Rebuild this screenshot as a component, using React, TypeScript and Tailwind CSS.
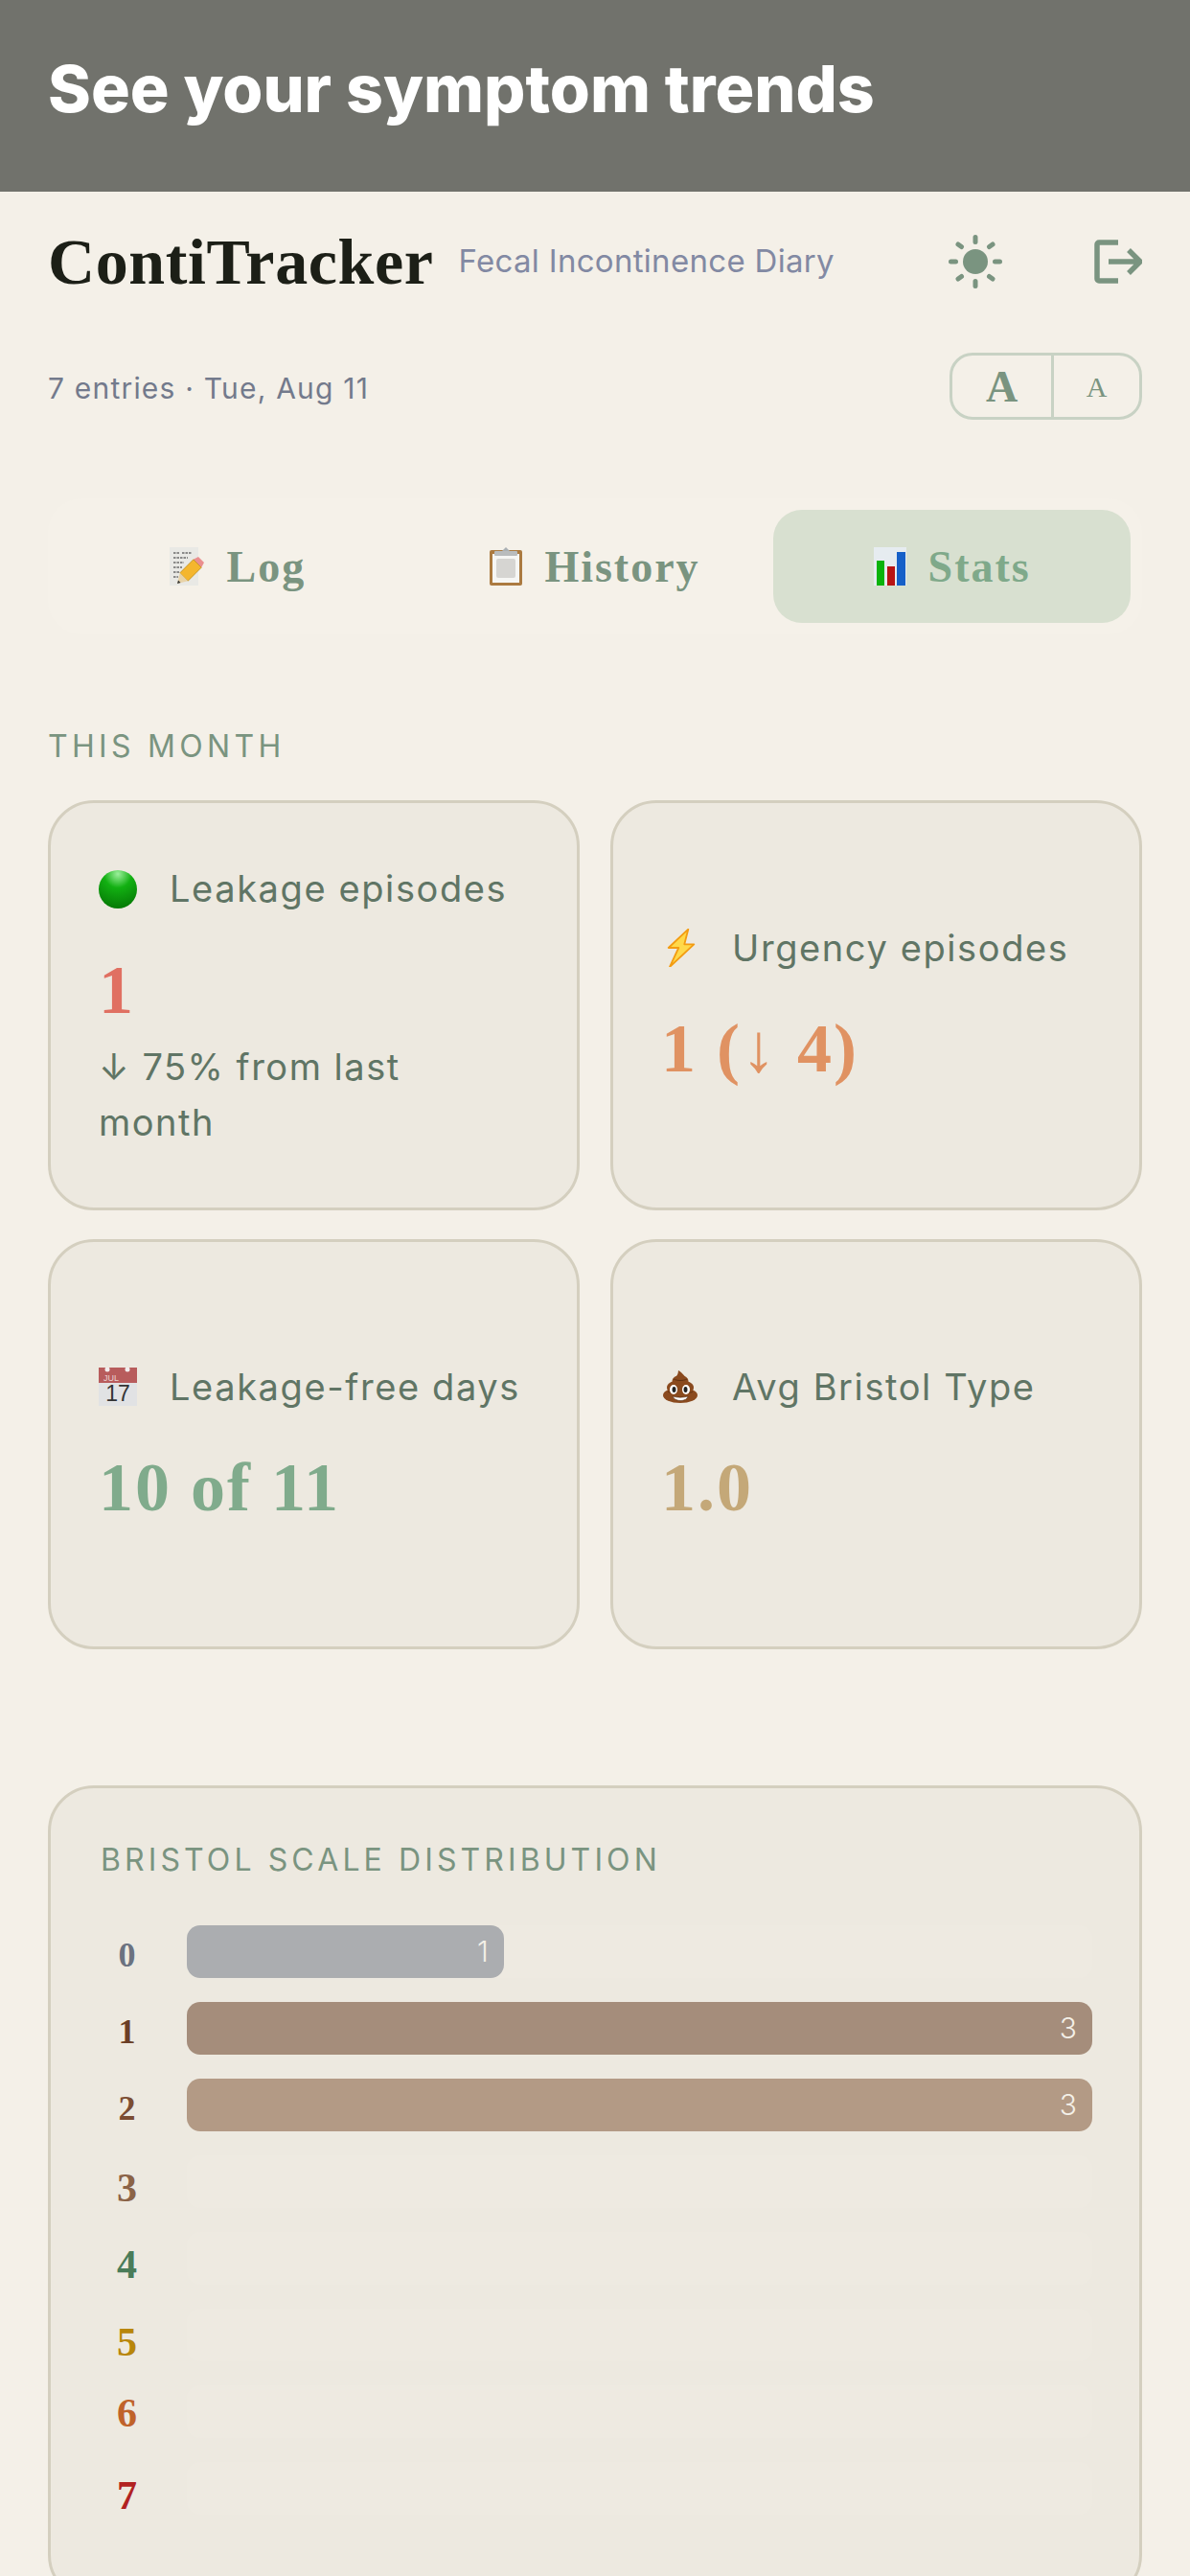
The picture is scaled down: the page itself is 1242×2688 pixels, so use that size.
import { ReactNode } from 'react';

const serif = "font-['Liberation_Serif',serif]";

function MemoIcon() {
  return (
    <svg viewBox="0 0 36 40" className="w-[36px] h-10 shrink-0">
      <rect x="0" y="0" width="30" height="40" fill="#e9e9e5" />
      <path d="M4 6h7M13 6h10M4 11h15M4 16h11M4 21h9M4 26h6M4 31h5" stroke="#6b6b6b" strokeWidth="1.500" strokeDasharray="2.500 1" />
      <path d="M24.800 12.800L33.200 21.200L36 16L30 10z" fill="#ea8f8f" />
      <path d="M10.800 26.800L24.800 12.800L33.200 21.200L19.200 35.200z" fill="#f4b62e" stroke="#b5830f" strokeWidth="0.700" />
      <path d="M10.800 26.800L19.200 35.200L8 38z" fill="#e8d3a8" />
      <path d="M9 34.500L11.500 37L8 38z" fill="#333" />
    </svg>
  );
}

function ClipboardIcon() {
  return (
    <svg viewBox="0 0 34 40" className="w-[34px] h-10 shrink-0">
      <rect x="0" y="3" width="34" height="37" rx="2" fill="#ab7a40" />
      <rect x="3" y="7" width="28" height="30" fill="#f6f6f4" />
      <rect x="7" y="12" width="20" height="20" rx="2" fill="#d6d5d2" />
      <path d="M13 4L17 0L21 4z" fill="#aab0b4" />
      <rect x="5" y="4" width="24" height="5" rx="1" fill="#b9bcbd" />
    </svg>
  );
}

function ChartIcon() {
  return (
    <svg viewBox="0 0 34 40" className="w-[34px] h-10 shrink-0">
      <rect x="0" y="0" width="34" height="40" fill="#e6ecf0" />
      <rect x="3" y="14" width="8" height="26" fill="#0ab30a" />
      <rect x="14" y="20" width="8" height="20" fill="#b81414" />
      <rect x="24" y="5" width="9" height="35" fill="#1660c8" />
    </svg>
  );
}

function CircleIcon() {
  return (
    <svg viewBox="0 0 40 40" className="w-10 h-10 shrink-0">
      <defs>
        <radialGradient id="greenBall" cx="50%" cy="10%" r="90%">
          <stop offset="0%" stopColor="#9cf09c" />
          <stop offset="40%" stopColor="#12b012" />
          <stop offset="100%" stopColor="#067a06" />
        </radialGradient>
      </defs>
      <circle cx="20" cy="20" r="20" fill="url(#greenBall)" />
    </svg>
  );
}

function BoltIcon() {
  return (
    <svg viewBox="0 0 40 40" className="w-10 h-10 shrink-0">
      <path d="M28.300 0.700L7.700 20H18.300L9 40L34.300 16.300H24.300z" fill="#ffd94a" stroke="#f39c12" strokeWidth="1.800" strokeLinejoin="round" />
    </svg>
  );
}

function CalendarIcon() {
  return (
    <svg viewBox="0 0 40 40" className="w-10 h-10 shrink-0">
      <rect x="0" y="0" width="40" height="40" fill="#e1e2e4" />
      <rect x="0" y="0" width="40" height="16" fill="#b85c5c" />
      <circle cx="9" cy="2" r="2.500" fill="#f2eded" />
      <circle cx="30" cy="2" r="2.500" fill="#f2eded" />
      <text x="5" y="14" fontSize="9" fill="#ecd3d3" fontFamily="Liberation Sans, sans-serif">JUL</text>
      <text x="20" y="35" textAnchor="middle" fontSize="23" fill="#333" fontFamily="Liberation Sans, sans-serif">17</text>
    </svg>
  );
}

function PoopIcon() {
  return (
    <svg viewBox="0 0 40 40" className="w-10 h-10 shrink-0">
      <g fill="#8a4a1e">
        <ellipse cx="20" cy="29" rx="18" ry="8" />
        <ellipse cx="20" cy="21" rx="14" ry="8" />
        <ellipse cx="20" cy="14" rx="8.500" ry="6" />
        <path d="M18 3c2 1 7 5 8 9H13c3-2 5-5 5-9z" />
      </g>
      <path d="M13 12c4 2 10 2 14 0M7 25c2 1 3 1 4 1M29 26c2 0 3 0 4-1" stroke="#5f3010" strokeWidth="1" fill="none" />
      <ellipse cx="13" cy="23" rx="4" ry="5" fill="#fff" />
      <ellipse cx="26" cy="23" rx="4" ry="5" fill="#fff" />
      <ellipse cx="13.500" cy="23" rx="2" ry="3" fill="#222" />
      <ellipse cx="25.500" cy="23" rx="2" ry="3" fill="#222" />
      <path d="M12 30c5 1.500 11 1.500 16 0-1 6-14 6-16 0z" fill="#fff" stroke="#4a2208" strokeWidth="0.600" />
    </svg>
  );
}

function SunIcon() {
  return (
    <svg viewBox="0 0 56 56" className="w-14 h-14" fill="#7a9480" stroke="#7a9480" strokeWidth="5" strokeLinecap="round">
      <circle cx="28" cy="28" r="13" stroke="none" />
      <path d="M28 2.500v5M28 48.500v5M2.500 28h5M48.500 28h5M10 10l3.500 2.500M46 10l-3.500 2.500M10 46l3.500-2.500M46 46l-3.500-2.500" fill="none" />
    </svg>
  );
}

function ExitIcon() {
  return (
    <svg viewBox="0 0 50 46" className="w-[50px] h-[46px]" fill="none" stroke="#7a9480" strokeWidth="5.500">
      <path d="M25 3H5a2 2 0 0 0-2 2v36a2 2 0 0 0 2 2h20" />
      <path d="M15 23h32M36 11l12 12-12 12" />
    </svg>
  );
}

function Tab({ icon, label, active }: { icon: ReactNode; label: string; active?: boolean }) {
  return (
    <div className={`flex-1 h-[118px] rounded-[30px] flex items-center justify-center gap-[23px] ${active ? 'bg-[#d8e0d0] text-[#7fa98a]' : 'text-[#7a9480]'}`}>
      {icon}
      <span className={`${serif} font-bold text-[46px] tracking-[2px]`}>{label}</span>
    </div>
  );
}

function StatCard({ icon, label, value, color, note }: { icon: ReactNode; label: string; value: string; color: string; note?: string }) {
  return (
    <div className="h-[428px] rounded-[48px] border-[3px] border-[#d4cfbf] bg-[#ede9e0] px-[50px] flex flex-col justify-center">
      <div className="flex items-center gap-[34px] h-[58px]">
        {icon}
        <span className="text-[38px] tracking-[1.600px] text-[#607565] whitespace-nowrap">{label}</span>
      </div>
      <div className={`${serif} ${color} font-bold text-[72px] tracking-[2px] leading-[80px] mt-[36px] mb-[4px]`}>{value}</div>
      {note && <div className="text-[38px] tracking-[1.500px] leading-[58px] text-[#607565] mt-[7px] max-w-[400px]">{note}</div>}
    </div>
  );
}

const rows = [
  { n: '0', label: 'text-[#6b7280] text-[36px] pt-[6px]', bar: 'bg-[#abadb0]', count: 1, width: 35 },
  { n: '1', label: 'text-[#6b3e26] text-[36px] pt-[6px]', bar: 'bg-[#a58d7b]', count: 3, width: 100 },
  { n: '2', label: 'text-[#7c4d33] text-[36px] pt-[6px]', bar: 'bg-[#b39a85]', count: 3, width: 100 },
  { n: '3', label: 'text-[#8b6347] text-[42px] pt-[12px]', bar: '', count: 0, width: 0 },
  { n: '4', label: 'text-[#4a7c59] text-[42px] pt-[12px]', bar: '', count: 0, width: 0 },
  { n: '5', label: 'text-[#b8860b] text-[42px] pt-[14px]', bar: '', count: 0, width: 0 },
  { n: '6', label: 'text-[#c0622a] text-[42px] pt-[2px]', bar: '', count: 0, width: 0 },
  { n: '7', label: 'text-[#b22222] text-[42px] pt-[14px]', bar: '', count: 0, width: 0 },
];

export default function App() {
  return (
    <div className="h-[2688px] overflow-hidden bg-[#f4f0e8] font-['Inter',sans-serif]">
      {/* Banner */}
      <div className="h-[200px] bg-[#71726c] flex items-center px-[50px] pb-[16px]">
        <h1 className="font-extrabold text-[68px] text-white">See your symptom trends</h1>
      </div>

      <div className="px-[50px]">
        {/* Header */}
        <div className="flex items-center h-[146px]">
          <span className={`${serif} font-bold text-[68px] tracking-[0.600px] text-[#1c1f17]`}>ContiTracker</span>
          <span className="ml-[26px] text-[33px] tracking-[0.300px] text-[#8289a3]">Fecal Incontinence Diary</span>
          <div className="ml-auto flex items-center gap-[96px]">
            <SunIcon />
            <ExitIcon />
          </div>
        </div>

        <div className="flex items-center justify-between mt-[22px]">
          <span className="text-[30px] tracking-[1.200px] text-[#737a8c] pt-[4px]">7 entries · Tue, Aug 11</span>
          <div className="w-[201px] h-[70px] rounded-[24px] border-[3px] border-[#c8d2c4] flex text-[#7a9480]">
            <div className={`${serif} font-bold text-[46px] w-[106px] flex items-center justify-center border-r-[3px] border-[#c8d2c4]`}>A</div>
            <div className={`${serif} text-[30px] flex-1 flex items-center justify-center`}>A</div>
          </div>
        </div>

        {/* Tabs */}
        <div className="mt-[82px] h-[142px] rounded-[36px] bg-[#f5f1e9] px-[12px] flex items-center">
          <Tab icon={<MemoIcon />} label="Log" />
          <Tab icon={<ClipboardIcon />} label="History" />
          <Tab icon={<ChartIcon />} label="Stats" active />
        </div>

        {/* This month */}
        <div className="mt-[93px] text-[32px] tracking-[4.300px] text-[#7a9480]">THIS MONTH</div>
        <div className="mt-[32px] grid grid-cols-2 gap-x-[32px] gap-y-[30px]">
          <StatCard icon={<CircleIcon />} label="Leakage episodes" value="1" color="text-[#e07062]" note="↓ 75% from last month" />
          <StatCard icon={<BoltIcon />} label="Urgency episodes" value="1 (↓ 4)" color="text-[#e09262]" />
          <StatCard icon={<CalendarIcon />} label="Leakage-free days" value="10 of 11" color="text-[#80ab8c]" />
          <StatCard icon={<PoopIcon />} label="Avg Bristol Type" value="1.0" color="text-[#c4a878]" />
        </div>

        {/* Bristol */}
        <div className="mt-[142px] rounded-[48px] border-[3px] border-[#d4cfbf] bg-[#ede9e0] pt-[56px] pl-[52px] pr-[49px] pb-[87px]">
          <div className="text-[32px] leading-[38px] tracking-[4.100px] text-[#7a9480]">BRISTOL SCALE DISTRIBUTION</div>
          <div className="mt-[49px] flex flex-col gap-[25px]">
            {rows.map(row => (
              <div key={row.n} className="flex items-center h-[55px]">
                <span className={`${serif} ${row.label} font-bold leading-none w-[55px] text-center`}>{row.n}</span>
                <div className="ml-[35px] flex-1 h-[55px] rounded-[14px] bg-[#eeeae1]">
                  {row.width > 0 && (
                    <div
                      className={`${row.bar} h-full rounded-[14px] flex items-center justify-end pr-[16px] text-[30px] font-light text-[#f4f0e8]`}
                      style={{ width: `${row.width}%` }}
                    >
                      {row.count}
                    </div>
                  )}
                </div>
              </div>
            ))}
          </div>
        </div>
      </div>
    </div>
  );
}
